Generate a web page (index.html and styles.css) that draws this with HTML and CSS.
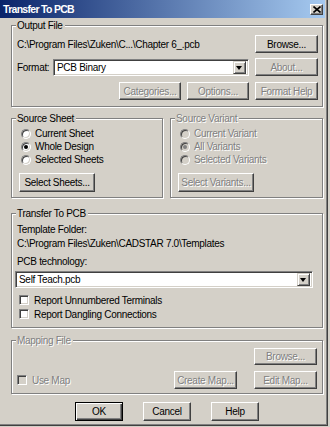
FILE: index.html
```html
<!DOCTYPE html>
<html lang="en">
<head>
    <meta charset="UTF-8">
    <title>Transfer To PCB</title>
    <link rel="stylesheet" href="styles.css">
</head>
<body>
    <div class="window">
        <div class="titlebar">
            <span class="title">Transfer To PCB</span>
            <span class="close-btn">
                <svg width="8" height="7" viewBox="0 0 8 7"><path d="M0.5 0.5 L7.5 6.5 M7.5 0.5 L0.5 6.5" stroke="#000" stroke-width="1.6"/></svg>
            </span>
        </div>
        <div class="content">
            <div class="group group-output">
                <span class="group-label">Output File</span>
                <div class="row">
                    <span class="grow">C:\Program Files\Zuken\C...\Chapter 6_.pcb</span>
                    <button class="btn w63">Browse...</button>
                </div>
                <div class="row row-format">
                    <span class="format-label">Format:</span>
                    <div class="combo grow">
                        <span class="combo-text">PCB Binary</span>
                        <span class="combo-arrow"></span>
                    </div>
                    <button class="btn w63" disabled>About...</button>
                </div>
                <div class="row row-right">
                    <button class="btn w62" disabled>Categories...</button>
                    <button class="btn w62" disabled>Options...</button>
                    <button class="btn w63" disabled>Format Help</button>
                </div>
            </div>

            <div class="group-pair">
                <div class="group group-source">
                    <span class="group-label">Source Sheet</span>
                    <label class="option"><span class="radio"></span>Current Sheet</label>
                    <label class="option"><span class="radio checked"></span>Whole Design</label>
                    <label class="option"><span class="radio"></span>Selected Sheets</label>
                    <button class="btn btn-select">Select Sheets...</button>
                </div>
                <div class="group group-source group-variant disabled">
                    <span class="group-label">Source Variant</span>
                    <label class="option"><span class="radio"></span>Current Variant</label>
                    <label class="option"><span class="radio checked"></span>All Variants</label>
                    <label class="option"><span class="radio"></span>Selected Variants</label>
                    <button class="btn btn-select" disabled>Select Variants...</button>
                </div>
            </div>

            <div class="group group-transfer">
                <span class="group-label">Transfer To PCB</span>
                <div class="line">Template Folder:</div>
                <div class="line">C:\Program Files\Zuken\CADSTAR 7.0\Templates</div>
                <div class="line line-tech">PCB technology:</div>
                <div class="combo combo-tech">
                    <span class="combo-text">Self Teach.pcb</span>
                    <span class="combo-arrow"></span>
                </div>
                <label class="check-row first"><span class="checkbox"></span>Report Unnumbered Terminals</label>
                <label class="check-row"><span class="checkbox"></span>Report Dangling Connections</label>
            </div>

            <div class="group group-mapping disabled">
                <span class="group-label">Mapping File</span>
                <div class="row row-right">
                    <button class="btn w63" disabled>Browse...</button>
                </div>
                <div class="row row-map">
                    <label class="check-row grow"><span class="checkbox"></span>Use Map</label>
                    <button class="btn w63" disabled>Create Map...</button>
                    <button class="btn w63" disabled>Edit Map...</button>
                </div>
            </div>

            <div class="dialog-buttons">
                <button class="btn btn-dialog default">OK</button>
                <button class="btn btn-dialog">Cancel</button>
                <button class="btn btn-dialog">Help</button>
            </div>
        </div>
    </div>
</body>
</html>
```

FILE: styles.css
```css
* {
    margin: 0;
    padding: 0;
    box-sizing: border-box;
}

body {
    background-color: #d4d0c8;
    font-family: "Liberation Sans", Arial, sans-serif;
    font-size: 10px;
    letter-spacing: -0.3px;
    color: #000;
}

.window {
    width: 328px;
    height: 426px;
    background-color: #d4d0c8;
    border-right: 1px solid #404040;
    border-bottom: 1px solid #404040;
    box-shadow: inset -1px -1px 0 #808080;
}

.titlebar {
    height: 18px;
    margin-right: 2px;
    display: flex;
    align-items: center;
    justify-content: space-between;
    padding: 0 2px 0 3px;
    background: linear-gradient(to right, #0a246a, #a6caf0);
}

.title {
    color: #fff;
    font-weight: bold;
    font-size: 10.5px;
    letter-spacing: -0.7px;
}

.close-btn {
    width: 13px;
    height: 11px;
    display: flex;
    align-items: center;
    justify-content: center;
    background: #d4d0c8;
    border: 1px solid;
    border-color: #fff #404040 #404040 #fff;
    box-shadow: inset -1px -1px 0 #808080;
}

.content {
    padding: 7px 0 0 11px;
}

/* group boxes */
.group {
    position: relative;
    width: 312px;
    border: 1px solid #808080;
    box-shadow: inset 1px 1px 0 #fff, 1px 1px 0 #fff;
}

.group-label {
    position: absolute;
    top: -7px;
    left: 4px;
    padding: 0 2px 0 1px;
    line-height: 13px;
    background-color: #d4d0c8;
    white-space: nowrap;
}

.disabled .group-label,
.disabled .option,
.disabled .check-row {
    color: #808080;
    text-shadow: 1px 1px 0 #fff;
}

.row {
    display: flex;
    align-items: center;
}

.grow {
    flex: 1;
}

.row-right {
    justify-content: flex-end;
    gap: 6px;
}

.group-output {
    padding: 9px 4px 6px 5px;
}

.group-output .row {
    height: 18px;
}

.row-format {
    margin-top: 5px;
}

.row-format .combo {
    margin-right: 6px;
}

.group-output .row-right {
    margin-top: 6px;
}

.format-label {
    width: 36px;
}

/* buttons */
.btn {
    height: 18px;
    font-family: inherit;
    font-size: 10px;
    letter-spacing: -0.3px;
    white-space: nowrap;
    color: #000;
    background-color: #d4d0c8;
    border: 1px solid;
    border-color: #fff #404040 #404040 #fff;
    box-shadow: inset -1px -1px 0 #808080;
    padding: 0;
}

.btn:disabled {
    color: #808080;
    text-shadow: 1px 1px 0 #fff;
}

.w62 {
    width: 62px;
}

.w63 {
    width: 63px;
}

/* combobox */
.combo {
    height: 17px;
    display: flex;
    align-items: center;
    background-color: #fff;
    border: 1px solid;
    border-color: #808080 #fff #fff #808080;
    box-shadow: inset 1px 1px 0 #404040, inset -1px -1px 0 #d4d0c8;
    padding: 1px 2px 1px 3px;
}

.combo-text {
    flex: 1;
}

.combo-arrow {
    position: relative;
    width: 13px;
    height: 13px;
    background-color: #d4d0c8;
    border: 1px solid;
    border-color: #d4d0c8 #404040 #404040 #d4d0c8;
    box-shadow: inset 1px 1px 0 #fff, inset -1px -1px 0 #808080;
}

.combo-arrow::after {
    content: "";
    position: absolute;
    left: 2px;
    top: 4px;
    border-left: 3.5px solid transparent;
    border-right: 3.5px solid transparent;
    border-top: 4px solid #000;
}

/* source groups */
.group-pair {
    display: flex;
    gap: 7px;
    margin-top: 11px;
}

.group-source {
    width: 152px;
    padding: 8px 4px 5px 9px;
}

.group-variant {
    width: 153px;
}

.option {
    display: flex;
    align-items: center;
    height: 13px;
    gap: 4px;
}

.radio {
    position: relative;
    width: 10px;
    height: 10px;
    border-radius: 50%;
    background-color: #fff;
    border: 1px solid;
    border-color: #808080 #fff #fff #808080;
    box-shadow: inset 1px 1px 0 #404040, inset -1px -1px 0 #d4d0c8;
}

.radio.checked::after {
    content: "";
    position: absolute;
    left: 2px;
    top: 2px;
    width: 4px;
    height: 4px;
    border-radius: 50%;
    background-color: #000;
}

.disabled .radio {
    background-color: #d4d0c8;
}

.disabled .radio.checked::after {
    background-color: #808080;
}

.btn-select {
    width: 76px;
    height: 19px;
    margin: 7px 0 0 -2px;
}

/* transfer group */
.group-transfer {
    margin-top: 15px;
    padding: 9px 9px 6px 5px;
}

.line {
    height: 14px;
    line-height: 14px;
}

.line-tech {
    margin-top: 4px;
}

.combo-tech {
    margin: 2px 0 0 -2px;
}

.check-row {
    display: flex;
    align-items: center;
    height: 14px;
    gap: 5px;
    padding-left: 2px;
}

.check-row.first {
    margin-top: 5px;
}

.checkbox {
    width: 10px;
    height: 10px;
    background-color: #fff;
    border: 1px solid;
    border-color: #808080 #fff #fff #808080;
    box-shadow: inset 1px 1px 0 #404040, inset -1px -1px 0 #d4d0c8;
}

.disabled .checkbox {
    background-color: #d4d0c8;
}

/* mapping group */
.group-mapping {
    margin-top: 12px;
    padding: 7px 5px 4px 5px;
}

.group-mapping .btn {
    height: 17px;
}

.row-map {
    margin-top: 6px;
    gap: 17px;
}

.row-map .btn {
    height: 18px;
}

.row-map .check-row {
    padding-left: 0;
}

/* dialog buttons */
.dialog-buttons {
    width: 312px;
    display: flex;
    justify-content: center;
    gap: 20px;
    margin-top: 8px;
}

.btn-dialog {
    width: 48px;
    height: 19px;
}

.btn-dialog.default {
    border: 1px solid #000;
    box-shadow: inset 1px 1px 0 #fff, inset -1px -1px 0 #404040, inset -2px -2px 0 #808080;
}
```
